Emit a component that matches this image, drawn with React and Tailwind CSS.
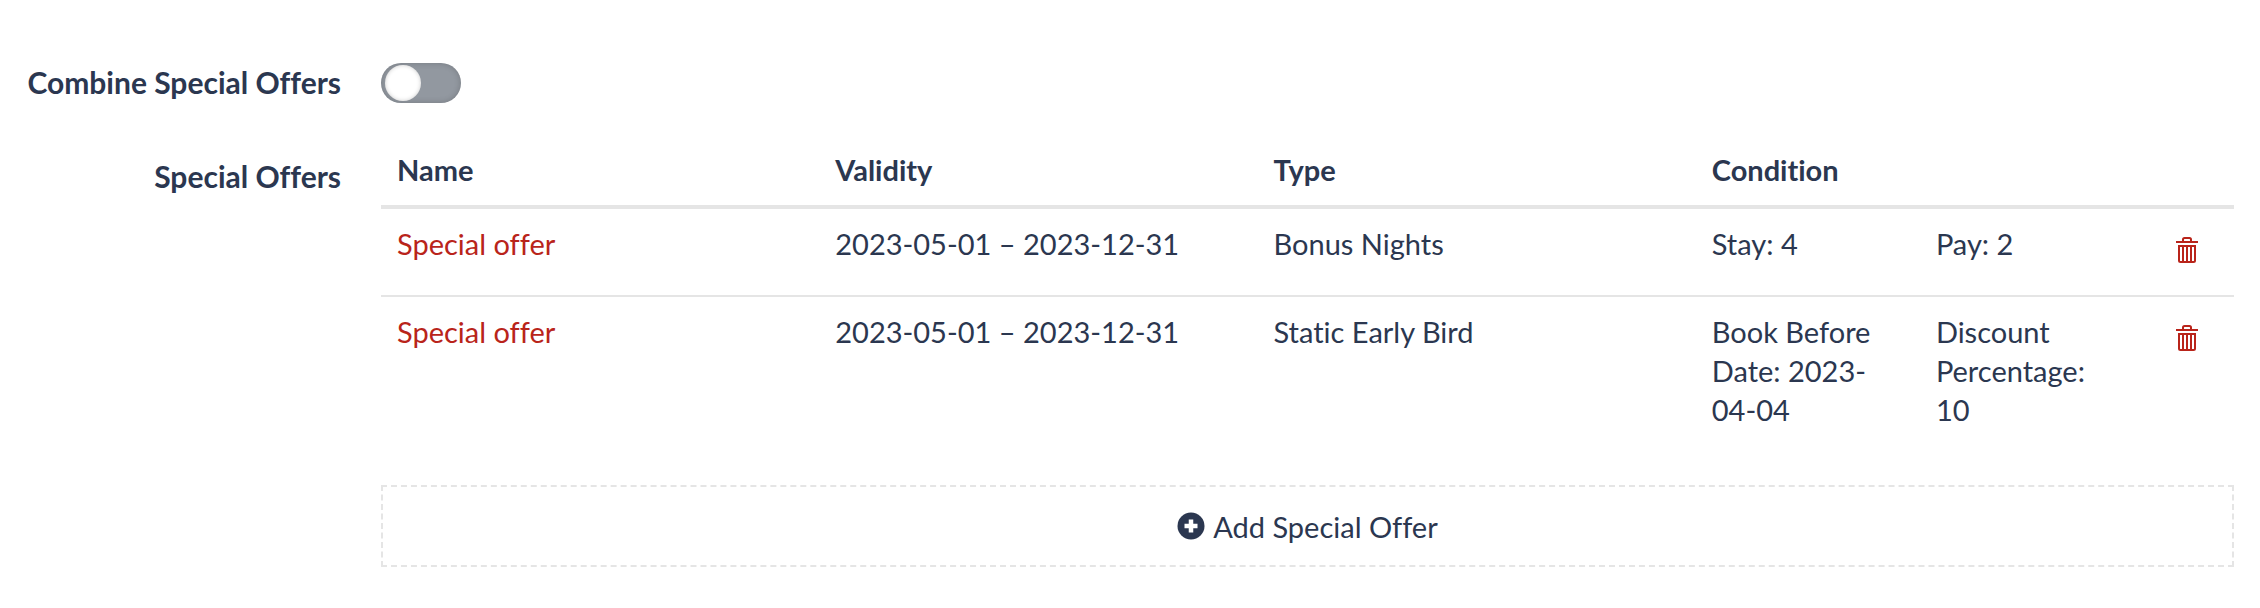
import React, { useState } from 'react';

const initialOffers = [
  {
    id: 1,
    name: 'Special offer',
    validity: '2023-05-01 – 2023-12-31',
    type: 'Bonus Nights',
    conditions: ['Stay: 4', 'Pay: 2'],
  },
  {
    id: 2,
    name: 'Special offer',
    validity: '2023-05-01 – 2023-12-31',
    type: 'Static Early Bird',
    conditions: ['Book Before Date: 2023-04-04', 'Discount Percentage: 10'],
  },
];

const TrashIcon = () => (
  <svg width="22" height="26" viewBox="0 0 22 26" fill="none" stroke="currentColor" strokeWidth="2" aria-hidden="true">
    <path d="M0 5h22" />
    <path d="M7 5V2.5Q7 1 8.500 1h5Q15 1 15 2.500V5" />
    <path d="M3 9h16v14.500Q19 25 17.500 25h-13Q3 25 3 23.500Z" />
    <path d="M7 9v16M11 9v16M15 9v16" />
  </svg>
);

const PlusCircleIcon = () => (
  <svg width="28" height="28" viewBox="0 0 28 28" aria-hidden="true">
    <circle cx="14" cy="14" r="13.500" fill="currentColor" />
    <path d="M14 7.500v13M7.500 14h13" stroke="#fff" strokeWidth="4.500" />
  </svg>
);

const OfferRow = ({ offer, onDelete }) => (
  <tr className="group align-top">
    <td className="h-[88px] border-b-2 border-[#e5e5e5] px-4 pt-[15px] pb-4 group-last:border-b-0">
      <a href="#offer" className="text-[#b9241a]">{offer.name}</a>
    </td>
    <td className="border-b-2 border-[#e5e5e5] px-4 pt-[15px] pb-4 group-last:border-b-0">{offer.validity}</td>
    <td className="border-b-2 border-[#e5e5e5] px-4 pt-[15px] pb-4 group-last:border-b-0">{offer.type}</td>
    <td className="border-b-2 border-[#e5e5e5] px-4 pt-[15px] pb-4 group-last:border-b-0">
      <div className="grid grid-cols-2 gap-x-[42px]">
        {offer.conditions.map(condition => (
          <div key={condition}>{condition}</div>
        ))}
      </div>
    </td>
    <td className="border-b-2 border-[#e5e5e5] pt-4 pr-9 group-last:border-b-0">
      <button
        type="button"
        aria-label="Delete special offer"
        onClick={() => onDelete(offer.id)}
        className="ml-auto flex h-[50px] items-center text-[#b9241a]"
      >
        <TrashIcon />
      </button>
    </td>
  </tr>
);

const App = () => {
  const [combine, setCombine] = useState(false);
  const [offers, setOffers] = useState(initialOffers);

  const handleDelete = id => setOffers(prev => prev.filter(o => o.id !== id));

  return (
    <div className="bg-white pt-[63px] pr-[26px] font-['Lato',sans-serif] text-[29px] leading-[39px] text-[#2b3750] [font-variant-ligatures:none]">
      <div className="flex items-start gap-10">
        <label htmlFor="combine" className="w-[341px] shrink-0 text-right text-[30px] leading-[38px] font-bold">
          Combine Special Offers
        </label>
        <input
          id="combine"
          type="checkbox"
          role="switch"
          checked={combine}
          onChange={e => setCombine(e.target.checked)}
          className="flex h-10 w-20 appearance-none items-center rounded-full bg-[#9298a0] px-1 shadow-[inset_0_0_6px_rgba(0,0,0,0.2)] before:size-9 before:rounded-full before:bg-white before:shadow-[inset_0_0_4px_rgba(0,0,0,0.2)] checked:justify-end checked:bg-[#2b3750]"
        />
      </div>

      <div className="mt-8 flex gap-10">
        <div id="offers-label" className="w-[341px] shrink-0 pt-[22px] text-right text-[30px] leading-[38px] font-bold">
          Special Offers
        </div>
        <div className="min-w-0 flex-1">
          <table aria-labelledby="offers-label" className="w-full table-fixed border-separate border-spacing-0">
            <thead>
              <tr className="text-left">
                <th className="border-b-4 border-[#e5e5e5] px-4 pt-[15px] pb-4">Name</th>
                <th className="border-b-4 border-[#e5e5e5] px-4 pt-[15px] pb-4">Validity</th>
                <th className="border-b-4 border-[#e5e5e5] px-4 pt-[15px] pb-4">Type</th>
                <th className="border-b-4 border-[#e5e5e5] px-4 pt-[15px] pb-4">Condition</th>
                <th className="w-[100px] border-b-4 border-[#e5e5e5]" aria-label="Actions" />
              </tr>
            </thead>
            <tbody>
              {offers.map(offer => (
                <OfferRow key={offer.id} offer={offer} onDelete={handleDelete} />
              ))}
            </tbody>
          </table>

          <button
            type="button"
            className="mt-10 flex h-[82px] w-full items-center justify-center gap-2 border-2 border-dashed border-[#e5e5e5]"
          >
            <PlusCircleIcon />
            Add Special Offer
          </button>
        </div>
      </div>
    </div>
  );
};

export default App;
